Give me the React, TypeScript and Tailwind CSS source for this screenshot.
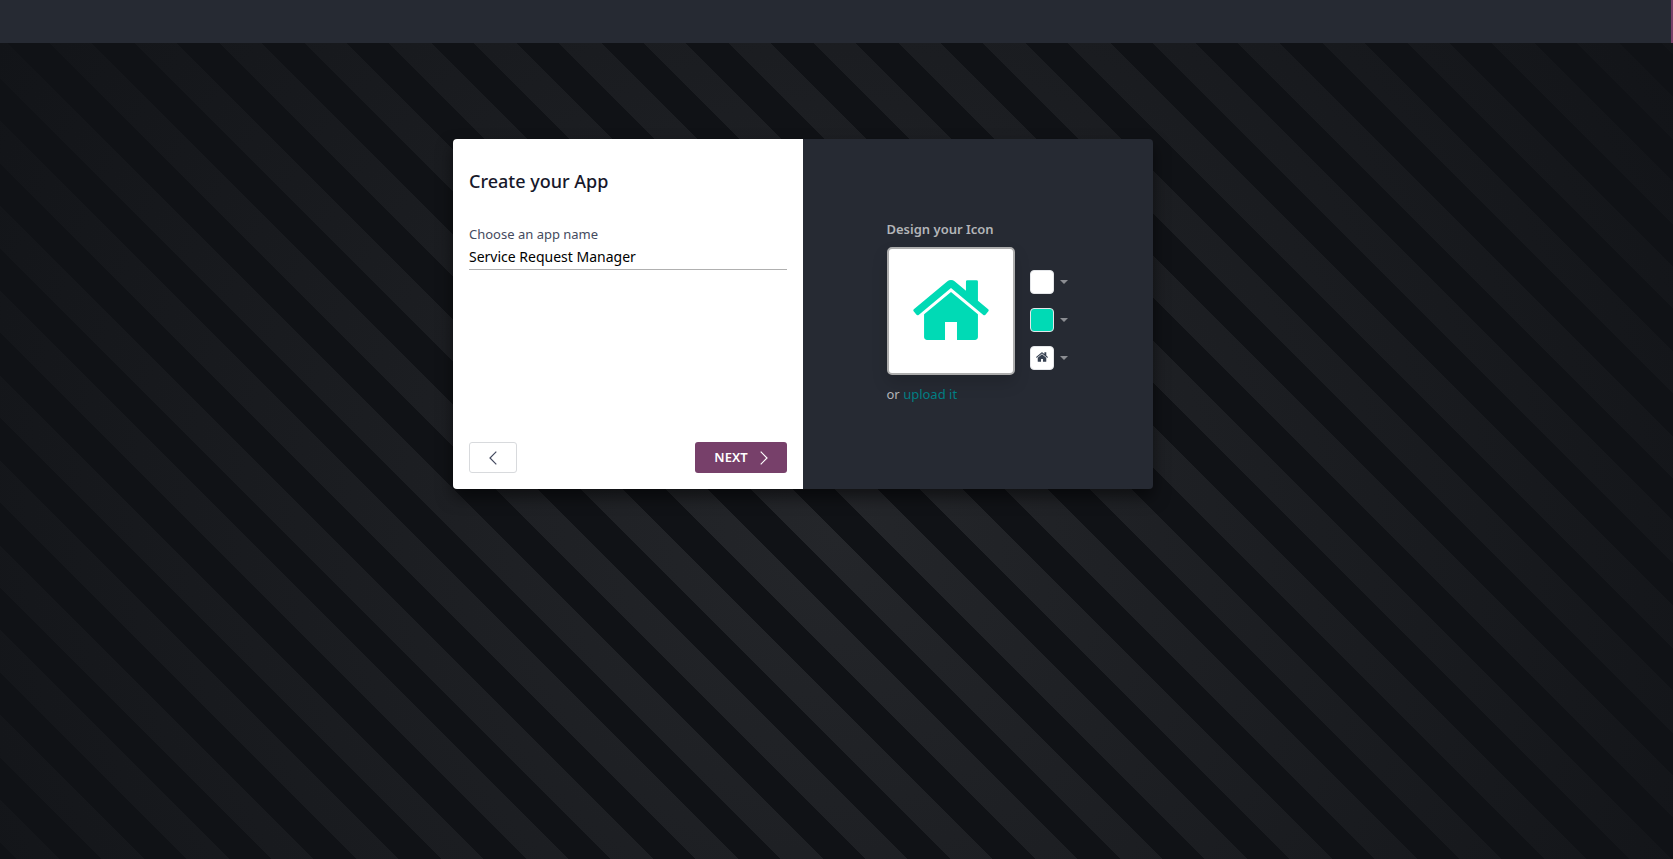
import React from "react";

function HomeIcon({ className }: { className: string }) {
  return (
    <svg viewBox="25 253 1614 1283" className={className} fill="currentColor" aria-hidden="true">
      <path d="M1408 992v480q0 26-19 45t-45 19h-384v-384h-256v384h-384q-26 0-45-19t-19-45v-480q0-1 .5-3t.5-3l575-474 575 474q1 2 1 6zm223-69l-62 74q-8 9-21 11h-3q-13 0-21-7l-692-577-692 577q-12 8-24 7-13-2-21-11l-62-74q-8-10-7-23.5t11-21.5l719-599q32-26 76-26t76 26l244 204v-195q0-14 9-23t23-9h192q14 0 23 9t9 23v408l219 182q10 8 11 21.5t-7 23.5z" />
    </svg>
  );
}

function Chevron({ points, className }: { points: string; className: string }) {
  return (
    <svg viewBox="0 0 8 14" className={className} fill="none" stroke="currentColor" strokeWidth="1.2" aria-hidden="true">
      <polyline points={points} />
    </svg>
  );
}

function Picker({ label, swatch, children }: { label: string; swatch: string; children?: React.ReactNode }) {
  return (
    <button type="button" aria-label={label} className="flex items-center gap-1.5">
      <span className={`flex size-6 items-center justify-center rounded border border-[#e4e6e9] ${swatch}`}>{children}</span>
      <svg viewBox="0 0 8 4" className="h-1 w-2 text-[#8b8d92]" fill="currentColor" aria-hidden="true">
        <path d="M0 0h8L4 4z" />
      </svg>
    </button>
  );
}

export default function App() {
  return (
    <div className="flex min-h-screen flex-col bg-[#101216] font-['Noto_Sans','Open_Sans',sans-serif] text-[13px]">
      <header className="h-[43px] border-r-2 border-[#7a4069] bg-[#262a33]" />
      <main className="flex flex-1 items-start justify-center bg-[repeating-linear-gradient(45deg,#101216_0_12px,transparent_12px_42px,#101216_42px_60px),radial-gradient(circle_farthest-corner_at_50%_60%,#24262a,#121418)] pt-24 pr-[67px]">
        <div className="flex min-h-[350px] w-[700px] overflow-hidden rounded shadow-[0_8px_16px_rgba(0,0,0,0.5)]">
          <section className="flex w-1/2 flex-col bg-white px-4 pt-7 pb-4">
            <h1 className="text-lg leading-7 font-medium text-[#17182b]">Create your App</h1>
            <label htmlFor="app-name" className="mt-[29px] leading-[21px] text-[#454b60]">
              Choose an app name
            </label>
            <input
              id="app-name"
              type="text"
              defaultValue="Service Request Manager"
              className="h-[25px] border-b border-[#b0b0b0] pb-0.5 text-sm text-black outline-none"
            />
            <div className="mt-auto flex justify-between">
              <button type="button" aria-label="Previous" className="flex h-[31px] w-12 items-center justify-center rounded-[3px] border border-[#d8dadd] text-[#454b60]">
                <Chevron points="7.3,0.7 1,7 7.3,13.3" className="h-3.5 w-2" />
              </button>
              <button type="button" className="flex h-[31px] w-[92px] items-center justify-center gap-3 rounded-[3px] bg-[#77406a] font-semibold text-white">
                NEXT
                <Chevron points="0.7,0.7 7,7 0.7,13.3" className="h-3.5 w-2" />
              </button>
            </div>
          </section>
          <section className="flex w-1/2 flex-col items-center justify-center bg-[#262a33] pr-0.5 pb-1 text-[#b3b5b8]">
            <div>
              <h2 className="leading-[21px] font-semibold">Design your Icon</h2>
              <div className="mt-[7px] flex items-center gap-[15px]">
                <div className="flex size-32 items-center justify-center rounded-[5px] border-2 border-[#adadad] bg-white pb-0.5 text-[#00dab5] shadow-[0_8px_16px_rgba(0,0,0,0.15)]">
                  <HomeIcon className="h-[60px] w-[76px]" />
                </div>
                <div className="mt-[18px] flex flex-col gap-3.5">
                  <Picker label="Background color" swatch="bg-white" />
                  <Picker label="Icon color" swatch="bg-[#00dab5]" />
                  <Picker label="Icon" swatch="bg-white pb-0.5 text-[#374151]">
                    <HomeIcon className="h-[10px] w-3" />
                  </Picker>
                </div>
              </div>
              <p className="mt-[9px] leading-[21px]">
                or <a href="#upload" className="text-[#017e84]">upload it</a>
              </p>
            </div>
          </section>
        </div>
      </main>
    </div>
  );
}
